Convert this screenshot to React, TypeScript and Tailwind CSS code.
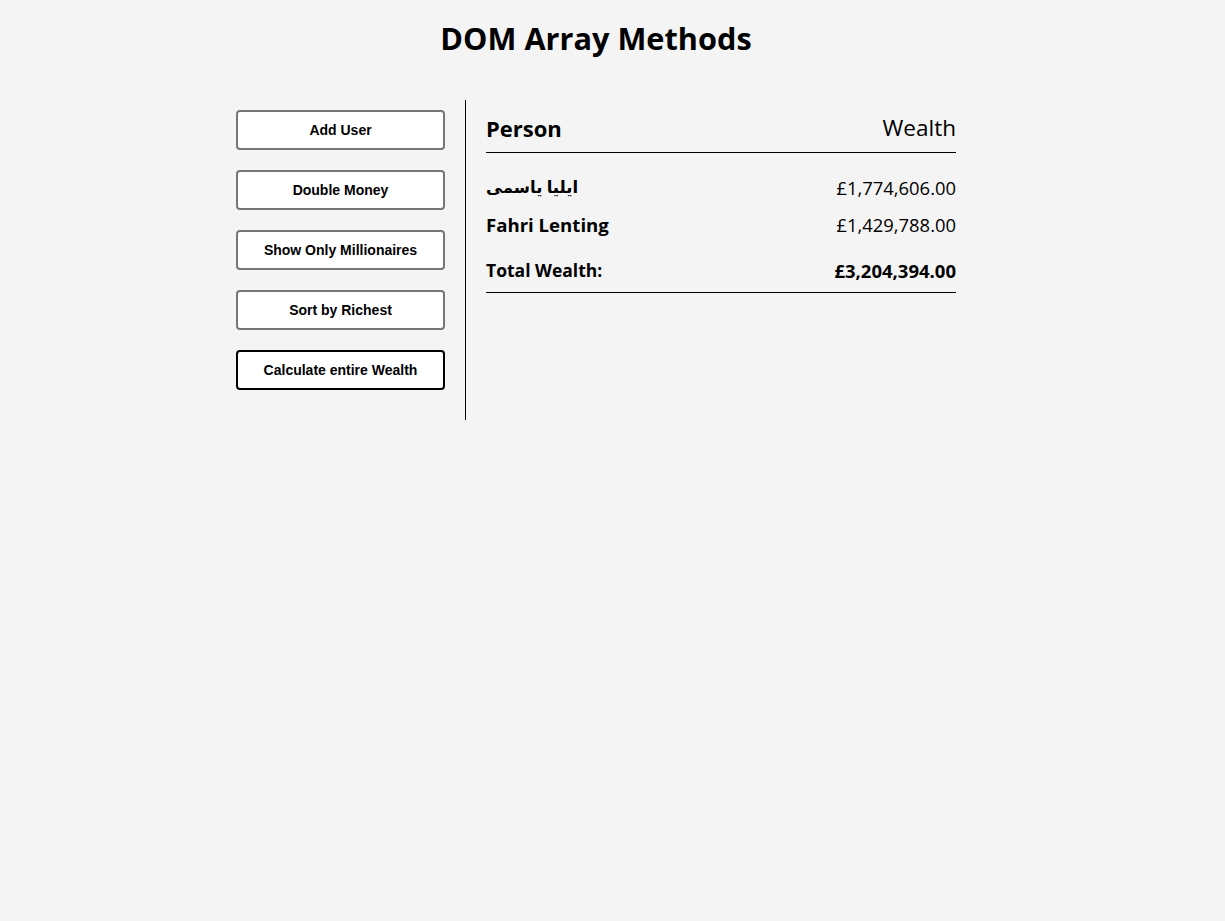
import React from "react";

const btn =
  "w-full h-[40px] mb-[20px] bg-white rounded-[4px] border-2 text-[14px] font-bold text-black";

export default function App() {
  return (
    <div
      className="min-h-[921px] bg-[#f4f4f4] text-black"
      style={{ fontFamily: '"Open Sans", "DejaVu Sans", sans-serif' }}
    >
      <div className="w-[760px] ml-[216px]">
        <h1 className="text-[30.7px] font-bold text-center leading-[38px] pt-[19px]">
          DOM Array Methods
        </h1>
        <div className="flex mt-[43px]">
          <aside className="w-[250px] shrink-0 border-r border-black px-[20px] pt-[10px] pb-[10px]">
            {[
              "Add User",
              "Double Money",
              "Show Only Millionaires",
              "Sort by Richest",
            ].map((t) => (
              <button
                key={t}
                className={btn + " border-[#767676] pt-[1px]"}
                style={{ fontFamily: '"Liberation Sans", Arial, sans-serif' }}
              >
                {t}
              </button>
            ))}
            <button
              className={btn + " border-black pt-[1px]"}
              style={{ fontFamily: '"Liberation Sans", Arial, sans-serif' }}
            >
              Calculate entire Wealth
            </button>
          </aside>
          <main className="flex-1 px-[20px] pt-[10px]">
            <div className="flex justify-between items-start h-[43px] border-b border-black">
              <span className="text-[22px] font-bold leading-[36px]">Person</span>
              <span className="text-[22.5px] leading-[36px]">Wealth</span>
            </div>
            <div className="flex justify-between items-center h-[37px] mt-[16px]">
              <strong className="text-[16.5px]">ايليا ياسمى</strong>
              <span className="text-[18.4px]">£1,774,606.00</span>
            </div>
            <div className="flex justify-between items-center h-[37px]">
              <strong className="text-[18.6px]">Fahri Lenting</strong>
              <span className="text-[18.4px]">£1,429,788.00</span>
            </div>
            <div className="flex justify-between items-center h-[44px] mt-[6px] border-b border-black">
              <strong className="text-[17.5px]">Total Wealth:</strong>
              <strong className="text-[18.5px]">£3,204,394.00</strong>
            </div>
          </main>
        </div>
      </div>
    </div>
  );
}
